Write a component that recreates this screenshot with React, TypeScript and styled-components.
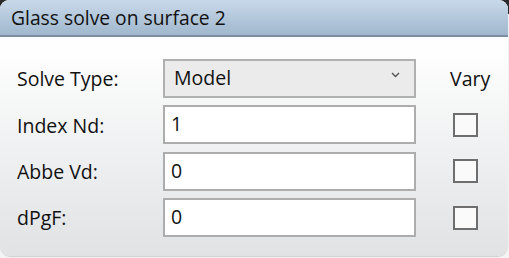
import React from "react";
import styled, { createGlobalStyle } from "styled-components";

const Global = createGlobalStyle`
  html, body { margin: 0; padding: 0; }
  body {
    width: 509px;
    height: 258px;
    overflow: hidden;
    background: linear-gradient(#2a2a2a 0 14px, #f4f4f4 14px);
    font-family: "Open Sans", "Noto Sans", sans-serif;
  }
`;

const Window = styled.div`
  width: 508px;
  height: 256px;
  display: flex;
  flex-direction: column;
  border-radius: 9px 9px 11px 11px;
  overflow: hidden;
  background: linear-gradient(#fefefe 20%, #e0e2e4);
  box-shadow: 0 1px 1px rgba(0, 0, 0, 0.15);
`;

const TitleBar = styled.div`
  height: 35px;
  flex: none;
  display: flex;
  align-items: center;
  padding: 0 0 1px 11px;
  box-sizing: border-box;
  height: 37px;
  background: linear-gradient(#c9d9ea, #a0b7cd);
  border-bottom: 2px solid #7c8fa2;
  font-size: 19.3px;
  color: #111;
`;

const Form = styled.div`
  display: grid;
  grid-template-columns: 146px 253px auto;
  grid-auto-rows: 39px;
  row-gap: 7.4px;
  padding: 22px 0 0 17px;
  align-items: center;
`;

const Label = styled.div`
  font-size: 19.5px;
  color: #111;
  line-height: 1;
  padding-top: 1px;
`;

const Field = styled.div<{ $select?: boolean }>`
  box-sizing: border-box;
  height: 39px;
  border: 2px solid ${(p) => (p.$select ? "#b0b0b0" : "#adadad")};
  background: ${(p) => (p.$select ? "#ebebeb" : "#ffffff")};
  display: flex;
  align-items: center;
  justify-content: space-between;
  padding: 0 14px 2px ${(p) => (p.$select ? "9px" : "6px")};
  font-size: 19.5px;
  color: #111;
`;

const Chevron = styled.svg`
  width: 9px;
  height: 6px;
  margin-top: -6px;
`;

const VaryCell = styled.div`
  padding-left: 36px;
  display: flex;
  align-items: center;
`;

const VaryText = styled.span`
  font-size: 19.5px;
  color: #111;
  margin-left: -2px;
`;

const Check = styled.div`
  box-sizing: border-box;
  width: 25px;
  height: 24px;
  margin-left: 1px;
  border: 2px solid #6e6e6e;
  background: #fafafa;
`;

const rows = [
  { label: "Index Nd:", value: "1" },
  { label: "Abbe Vd:", value: "0" },
  { label: "dPgF:", value: "0" },
];

export default function App() {
  return (
    <>
      <Global />
      <Window>
        <TitleBar>Glass solve on surface 2</TitleBar>
        <Form>
          <Label>Solve Type:</Label>
          <Field $select>
            <span>Model</span>
            <Chevron viewBox="0 0 9 6">
              <path d="M1 1 L4.5 4.5 L8 1" fill="none" stroke="#555" strokeWidth="1.4" />
            </Chevron>
          </Field>
          <VaryCell>
            <VaryText>Vary</VaryText>
          </VaryCell>
          {rows.map((r) => (
            <React.Fragment key={r.label}>
              <Label>{r.label}</Label>
              <Field>{r.value}</Field>
              <VaryCell>
                <Check />
              </VaryCell>
            </React.Fragment>
          ))}
        </Form>
      </Window>
    </>
  );
}
